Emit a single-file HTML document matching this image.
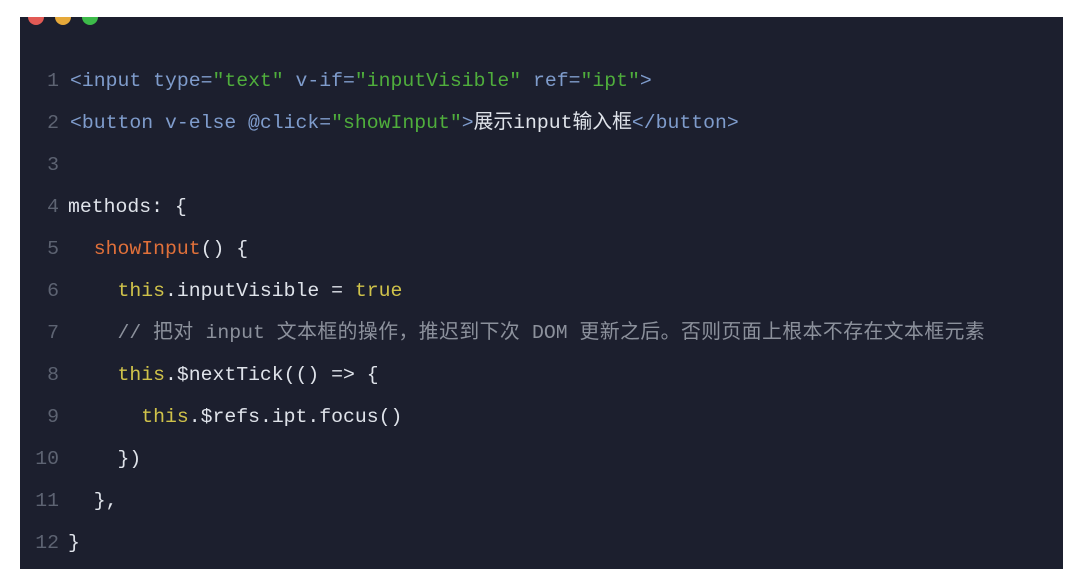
<!DOCTYPE html>
<html><head><meta charset="utf-8"><style>
body{margin:0;width:1082px;height:577px;background:#fff;overflow:hidden;position:relative}
.box{position:absolute;left:20px;top:17px;width:1043px;height:552px;background:#1c1f2e;overflow:hidden}
.dot{position:absolute;top:-8px;width:16px;height:16px;border-radius:50%}
.l{position:absolute;left:0;width:1043px;height:30px;font:19.8px/30px "Liberation Mono","Noto Sans CJK SC",monospace;color:#dfe3ea;white-space:pre}
.n{position:absolute;left:0;width:39px;color:#5d6372;text-align:right}
.c{position:absolute;left:50px}
.t{color:#7f9ccc}.s{color:#4fae3c}.o{color:#e0703a}.y{color:#cfc24a}.g{color:#8c919c}
.cj{letter-spacing:0.5px}
</style></head><body>
<div class="box">
<div class="dot" style="left:8px;background:#e25a55"></div>
<div class="dot" style="left:35px;background:#e6a93a"></div>
<div class="dot" style="left:62px;background:#3dbb4a"></div>
<div class="l" style="top:49px"><span class="n">1</span><span class="c"><span class="t">&lt;input type=</span><span class="s">"text"</span><span class="t"> v-if=</span><span class="s">"inputVisible"</span><span class="t"> ref=</span><span class="s">"ipt"</span><span class="t">&gt;</span></span></div>
<div class="l" style="top:91px"><span class="n">2</span><span class="c"><span class="t">&lt;button v-else @click=</span><span class="s">"showInput"</span><span class="t">&gt;</span>展示input输入框<span class="t">&lt;/button&gt;</span></span></div>
<div class="l" style="top:133px"><span class="n">3</span></div>
<div class="l" style="top:175px"><span class="n">4</span><span class="c" style="left:48px">methods: {</span></div>
<div class="l" style="top:217px"><span class="n">5</span><span class="c">  <span class="o">showInput</span>() {</span></div>
<div class="l" style="top:259px"><span class="n">6</span><span class="c">    <span class="y">this</span>.inputVisible = <span class="y">true</span></span></div>
<div class="l" style="top:301px"><span class="n">7</span><span class="c g">    // <span class="cj">把对</span> input <span class="cj">文本框的操作，推迟到下次</span> DOM <span class="cj">更新之后。否则页面上根本不存在文本框元素</span></span></div>
<div class="l" style="top:343px"><span class="n">8</span><span class="c">    <span class="y">this</span>.$nextTick(() =&gt; {</span></div>
<div class="l" style="top:385px"><span class="n">9</span><span class="c">      <span class="y">this</span>.$refs.ipt.focus()</span></div>
<div class="l" style="top:427px"><span class="n">10</span><span class="c">    })</span></div>
<div class="l" style="top:469px"><span class="n">11</span><span class="c">  },</span></div>
<div class="l" style="top:511px"><span class="n">12</span><span class="c" style="left:48px">}</span></div>
</div>
</body></html>
